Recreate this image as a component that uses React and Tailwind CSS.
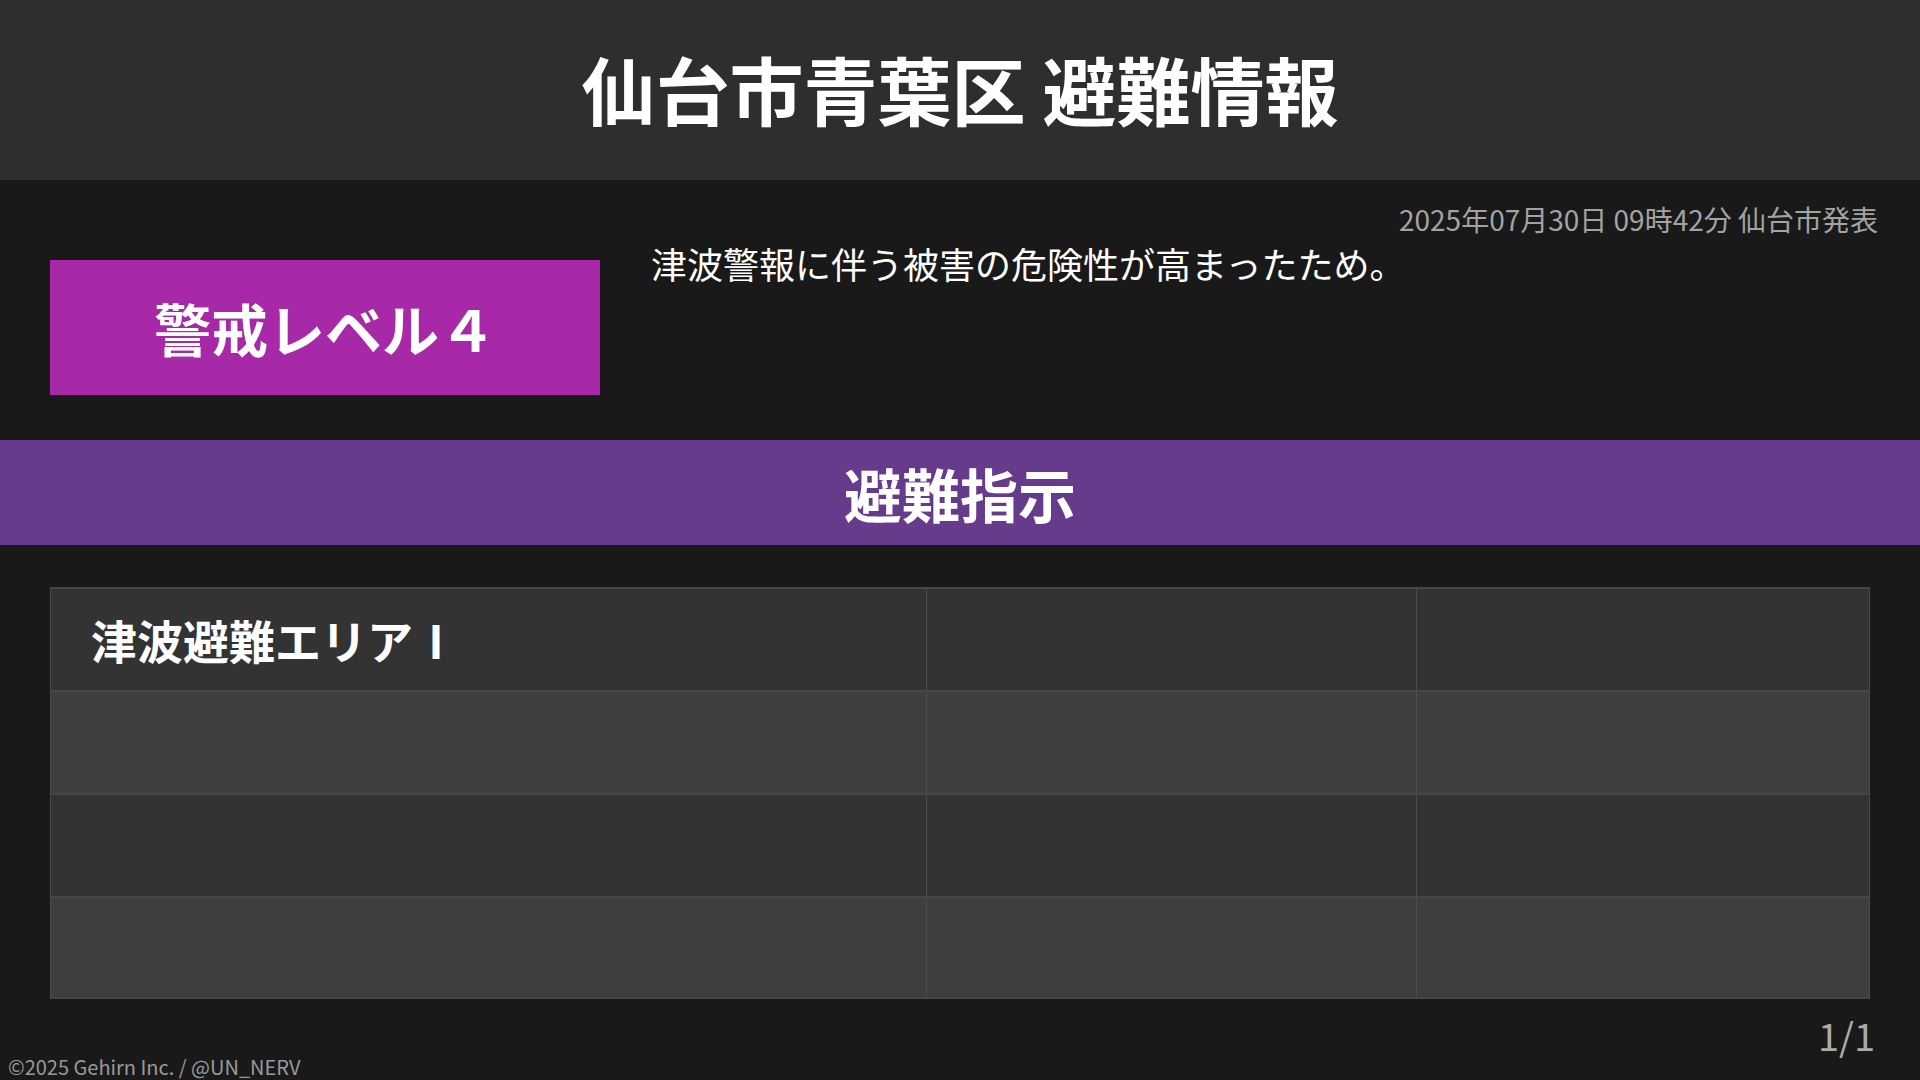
const rows = [
  { area: '津波避難エリアⅠ', b: '', c: '' },
  { area: '', b: '', c: '' },
  { area: '', b: '', c: '' },
  { area: '', b: '', c: '' },
];

const font = { fontFamily: '"Noto Sans CJK JP", "Noto Sans", sans-serif' };

export default function App() {
  return (
    <div className="flex h-screen w-full flex-col overflow-hidden bg-[#191919] text-white" style={font}>
      {/* Header */}
      <header className="flex h-[180px] shrink-0 items-center justify-center bg-[#2e2e2e] pb-[4px]">
        <h1 className="text-[74px] font-bold leading-none">仙台市青葉区 避難情報</h1>
      </header>

      {/* Level + reason */}
      <section className="flex h-[260px] shrink-0 pl-[50px] pr-[42px]">
        <div className="mt-[80px] flex h-[135px] w-[550px] shrink-0 items-center justify-center bg-[#a829a8]">
          <span className="text-[57px] font-bold leading-none">警戒レベル４</span>
        </div>
        <div className="ml-[51px] flex flex-1 flex-col">
          <div className="mt-[25px] text-right text-[28px] leading-none text-[#a3a3a3]">
            2025年07月30日 09時42分 仙台市発表
          </div>
          <p className="mt-[12px] text-[36px] leading-none">津波警報に伴う被害の危険性が高まったため。</p>
        </div>
      </section>

      {/* Category bar */}
      <div className="flex h-[105px] shrink-0 items-center justify-center bg-[#673b8c]">
        <span className="text-[58px] font-bold leading-none">避難指示</span>
      </div>

      {/* Area table */}
      <div className="mx-[50px] mt-[42px] border-x border-[#4a4a4a]">
        {rows.map((row, i) => (
          <div
            key={i}
            className={
              'flex h-[103px] border-t-2 border-[#464646] ' +
              (i % 2 === 0 ? 'bg-[#333333] ' : 'bg-[#3e3e3e] ') +
              (i === rows.length - 1 ? 'border-b-2' : '')
            }
          >
            <div className="flex w-[876px] items-center border-r border-[#4d4d4d] pb-[2px] pl-[40px] text-[46px] font-bold leading-none">
              {row.area}
            </div>
            <div className="w-[490px] border-r border-[#4d4d4d]">{row.b}</div>
            <div className="flex-1">{row.c}</div>
          </div>
        ))}
      </div>

      {/* Footer */}
      <div className="mt-[17px] pr-[45px] text-right text-[38px] leading-none text-[#ababab]">1/1</div>
      <div className="mt-[3px] pl-[8px] text-[20px] leading-none text-[#999999]">©2025 Gehirn Inc. / @UN_NERV</div>
    </div>
  );
}
